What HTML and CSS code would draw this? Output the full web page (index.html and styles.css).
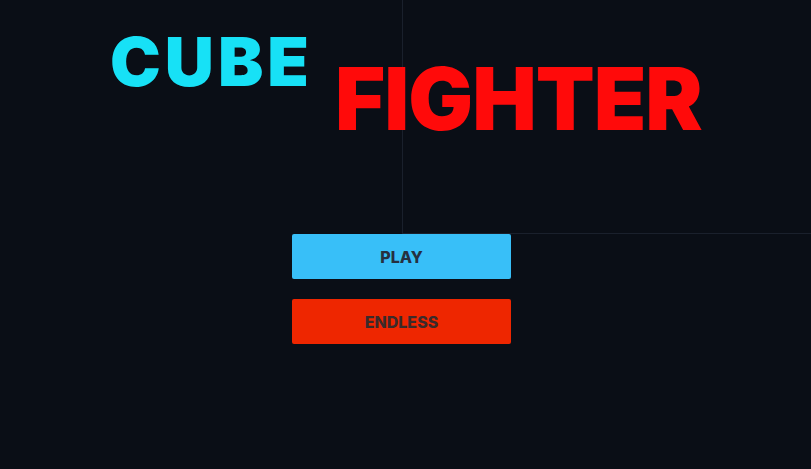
FILE: index.html
```html
<!DOCTYPE html>
<html>
<head>
<meta charset="utf-8">
<link rel="stylesheet" href="styles.css">
</head>
<body>
<div class="screen">
  <div class="quadrant"></div>
  <h1 class="title">
    <span class="cube">CUBE</span>
    <span class="fighter">FIGHTER</span>
  </h1>
  <div class="menu">
    <button class="btn btn-play">PLAY</button>
    <button class="btn btn-endless">ENDLESS</button>
  </div>
</div>
</body>
</html>
```
FILE: styles.css
```css
html, body {
  margin: 0;
  padding: 0;
  background: #0a0e16;
}
.screen {
  position: relative;
  width: 811px;
  height: 469px;
  overflow: hidden;
  font-family: Inter, "Noto Sans", sans-serif;
}
.quadrant {
  position: absolute;
  left: 402px;
  top: 0;
  width: 409px;
  height: 233px;
  border-left: 1px solid #1a202c;
  border-bottom: 1px solid #1a202c;
}
.title {
  position: relative;
  margin: 0;
  padding: 0;
  display: flex;
  flex-direction: column;
  font-weight: 900;
  line-height: 1;
}
.cube {
  color: #17e1f6;
  font-size: 68px;
  margin-left: 110px;
  margin-top: 27px;
  letter-spacing: 4px;
}
.fighter {
  color: #ff0a0a;
  font-size: 86px;
  margin-left: 335px;
  margin-top: -39px;
  letter-spacing: -1px;
}
.menu {
  position: relative;
  display: flex;
  flex-direction: column;
  gap: 20px;
  margin-left: 292px;
  margin-top: 92px;
  width: 219px;
}
.btn {
  height: 45px;
  border: none;
  border-radius: 2px;
  font-family: Inter, "Noto Sans", sans-serif;
  font-weight: 800;
  font-size: 16px;
  color: #263040;
  padding: 0;
}
.btn-play { background: #38bff8; }
.btn-endless { background: #ee2600; color: #3a2a2a; }
```
